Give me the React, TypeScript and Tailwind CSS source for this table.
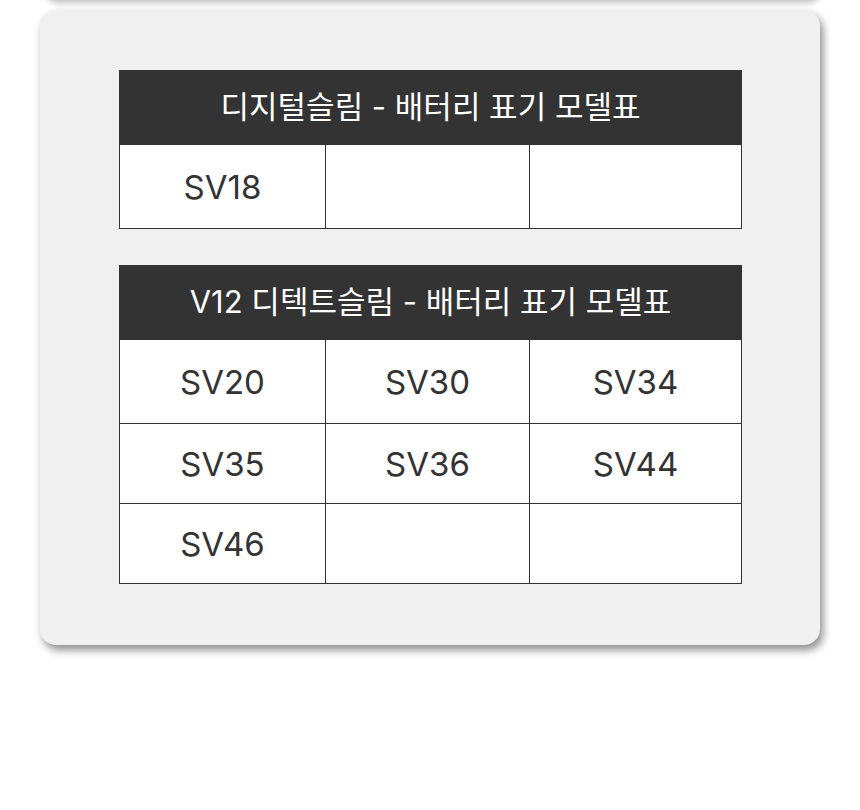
import React from 'react';

const font = { fontFamily: 'Inter, "Noto Sans CJK KR", sans-serif' };

interface ModelTableProps {
  title: string;
  rows: string[][];
}

function ModelTable({ title, rows }: ModelTableProps) {
  return (
    <div className="w-[623px]">
      <div className="h-[75px] bg-[#333333] text-white text-[31px] flex items-center justify-center">
        {title}
      </div>
      <div className="border-l border-[#333333]">
        {rows.map((row, i) => (
          <div key={i} className={`flex ${i === 0 ? 'h-[84px]' : 'h-[80px]'}`}>
            {row.map((cell, j) => (
              <div
                key={j}
                className={`${j === 0 ? 'w-[206px]' : j === 1 ? 'w-[204px]' : 'w-[212px]'} border-r border-b border-[#333333] bg-white flex items-center justify-center pt-[2px] text-[33px] text-[#333333]`}
              >
                {cell}
              </div>
            ))}
          </div>
        ))}
      </div>
    </div>
  );
}

export default function App() {
  return (
    <div className="min-h-[810px] bg-white overflow-hidden" style={font}>
      <div className="pl-[40px] pt-[10px]">
        {/* previous card, only its bottom edge shows */}
        <div className="w-[780px] h-[200px] mt-[-210px] mb-[10px] bg-white rounded-2xl shadow-[3px_3px_6px_rgba(0,0,0,0.25)]" />
        <div className="w-[780px] bg-[#f0f0f0] rounded-2xl shadow-[3px_5px_8px_rgba(0,0,0,0.45)] pl-[79px] pt-[60px] pb-[61px] flex flex-col gap-[36px]">
          <ModelTable title="디지털슬림 - 배터리 표기 모델표" rows={[['SV18', '', '']]} />
          <ModelTable
            title="V12 디텍트슬림 - 배터리 표기 모델표"
            rows={[
              ['SV20', 'SV30', 'SV34'],
              ['SV35', 'SV36', 'SV44'],
              ['SV46', '', ''],
            ]}
          />
        </div>
      </div>
    </div>
  );
}
